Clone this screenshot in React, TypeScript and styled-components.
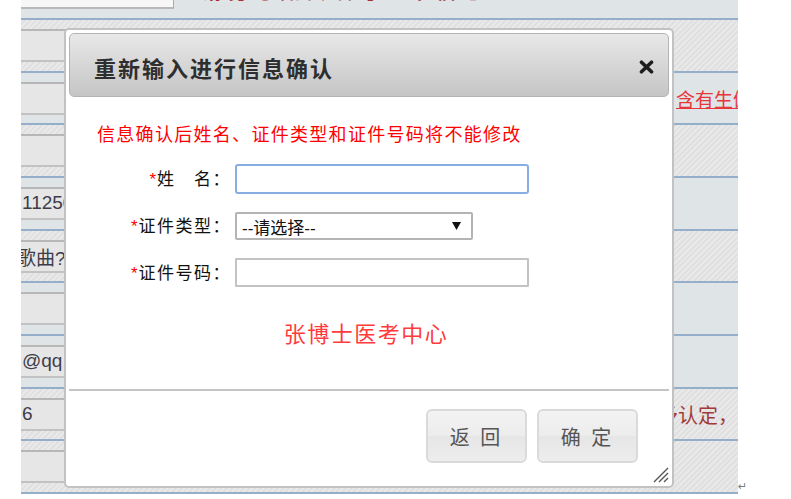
import React from 'react';
import styled, { createGlobalStyle } from 'styled-components';

const GlobalStyle = createGlobalStyle`
	html, body {
		margin: 0;
		padding: 0;
		background: #ffffff;
	}
	body {
		font-family: 'Liberation Sans', 'Noto Sans CJK SC', sans-serif;
	}
	* {
		box-sizing: border-box;
	}
`;

type RowData = {
	value: string;
	striped: boolean;
	note?: string;
	noteKind?: 'link' | 'tail';
};

const rows: RowData[] = [
	{ value: '', striped: true },
	{ value: '', striped: false, note: '含有生僻字的请点击这里', noteKind: 'link' },
	{ value: '', striped: true },
	{ value: '11250', striped: false },
	{ value: '歌曲?', striped: true },
	{ value: '', striped: false },
	{ value: '@qq.com', striped: false },
	{ value: '6', striped: true, note: '经本人确认后不予认定，', noteKind: 'tail' },
	{ value: '', striped: true },
];

function App() {
	return (
		<Page>
			<GlobalStyle />
			<Sheet>
				<TopStrip>
					<TopBox />
					<TopNotice>请务必如实填写以下信息</TopNotice>
				</TopStrip>
				<Rows>
					{rows.map((row, i) => (
						<Row key={i} $striped={row.striped}>
							<FieldBox $offset={row.value === '歌曲?' ? -4 : 1}>{row.value}</FieldBox>
							<NoteCell $kind={row.noteKind}>
								<NoteText $kind={row.noteKind}>{row.note}</NoteText>
							</NoteCell>
						</Row>
					))}
				</Rows>
				<Dialog>
					<Header>
						<Title>重新输入进行信息确认</Title>
						<CloseButton aria-label="关闭">
							<svg width="15" height="14" viewBox="0 0 15 14">
								<path
									d="M2.5 2.2 L12.5 11.8 M12.5 2.2 L2.5 11.8"
									stroke="#1e1e1e"
									strokeWidth="3.6"
									strokeLinecap="round"
								/>
							</svg>
						</CloseButton>
					</Header>
					<Body>
						<Warning>信息确认后姓名、证件类型和证件号码将不能修改</Warning>
						<Form>
							<Label>
								<Star>*</Star>姓　名：
							</Label>
							<TextInput $focused />
							<Label>
								<Star>*</Star>证件类型：
							</Label>
							<SelectBox>
								<span>--请选择--</span>
								<svg width="9" height="8" viewBox="0 0 9 8">
									<path d="M0 0 H9 L4.5 8 Z" fill="#111" />
								</svg>
							</SelectBox>
							<Label>
								<Star>*</Star>证件号码：
							</Label>
							<TextInput />
						</Form>
						<Brand>张博士医考中心</Brand>
					</Body>
					<Divider />
					<Footer>
						<Button>返 回</Button>
						<Button>确 定</Button>
					</Footer>
					<Grip>
						<svg width="16" height="16" viewBox="0 0 16 16">
							<path
								d="M1 15 L15 1 M6 15 L15 6 M11 15 L15 11"
								stroke="#555"
								strokeWidth="1.4"
							/>
						</svg>
					</Grip>
				</Dialog>
			</Sheet>
			<ReturnMark>↵</ReturnMark>
		</Page>
	);
}

const Page = styled.div`
	display: flex;
	align-items: flex-end;
	padding-left: 21px;
	width: 791px;
	height: 499px;
`;

const Sheet = styled.div`
	position: relative;
	width: 717px;
	height: 494px;
	overflow: hidden;
	display: flex;
	flex-direction: column;
	align-self: flex-start;
`;

const TopStrip = styled.div`
	height: 20px;
	display: flex;
	align-items: flex-start;
	background: #dfe4e7;
	border-bottom: 2px solid #95aec9;
	overflow: hidden;
`;

const TopBox = styled.div`
	width: 153px;
	height: 9px;
	background: #f7f7f7;
	border-right: 1px solid #acacac;
	border-bottom: 2px solid #b8b8b8;
`;

const TopNotice = styled.span`
	margin: -19px 0 0 28px;
	font-size: 20px;
	line-height: 22px;
	color: #a53232;
	font-weight: bold;
	letter-spacing: 6px;
`;

const Rows = styled.div`
	flex: 1;
	display: flex;
	flex-direction: column;
`;

const Row = styled.div<{ $striped: boolean }>`
	flex: 1;
	display: flex;
	align-items: center;
	border-bottom: 2px solid #95aec9;
	background: ${(p) =>
		p.$striped
			? 'repeating-linear-gradient(135deg, #e9e9e9 0 2px, #e0e0e0 2px 4px)'
			: '#dfe4e7'};
`;

const FieldBox = styled.div<{ $offset: number }>`
	flex: none;
	width: 420px;
	height: 33px;
	margin-left: -10px;
	padding-left: ${(p) => 10 + p.$offset}px;
	display: flex;
	align-items: center;
	background: #e6e6e6;
	border-top: 2px solid #b7b7b7;
	border-bottom: 2px solid #c2c2c2;
	font-size: 19px;
	color: #3d3d4a;
	white-space: nowrap;
	overflow: hidden;
`;

const NoteCell = styled.div<{ $kind?: 'link' | 'tail' }>`
	flex: 1;
	min-width: 0;
	white-space: nowrap;
	overflow: hidden;
	display: flex;
	justify-content: ${(p) => (p.$kind === 'tail' ? 'flex-end' : 'flex-start')};
	padding-left: ${(p) => (p.$kind === 'link' ? 245 : 0)}px;
`;

const NoteText = styled.span<{ $kind?: 'link' | 'tail' }>`
	flex: none;
	font-size: ${(p) => (p.$kind === 'tail' ? 20 : 19)}px;
	color: ${(p) => (p.$kind === 'link' ? '#e8353a' : '#a23a3a')};
	text-decoration: ${(p) => (p.$kind === 'link' ? 'underline' : 'none')};
`;

const Dialog = styled.div`
	position: absolute;
	left: 43px;
	top: 28px;
	width: 610px;
	height: 460px;
	padding: 3px;
	background: #ffffff;
	border: 2px solid #c2c2c2;
	border-radius: 5px;
	display: flex;
	flex-direction: column;
	font-family: 'Noto Sans CJK SC', 'Liberation Sans', sans-serif;
`;

const Header = styled.div`
	height: 64px;
	flex: none;
	display: flex;
	align-items: center;
	justify-content: space-between;
	padding: 3px 14px 0 24px;
	border: 1px solid #b4b4b4;
	border-radius: 5px;
	background: linear-gradient(#e8e8e8, #c5c5c5);
`;

const Title = styled.h2`
	margin: 0;
	font-size: 22px;
	line-height: 28px;
	font-weight: bold;
	letter-spacing: 2px;
	color: #2e2e2e;
`;

const CloseButton = styled.span`
	display: flex;
	align-items: center;
	padding-top: 1px;
	cursor: pointer;
`;

const Body = styled.div`
	flex: 1;
	display: flex;
	flex-direction: column;
`;

const Warning = styled.p`
	margin: 24px 0 0 28px;
	font-size: 18px;
	line-height: 24px;
	letter-spacing: 1.3px;
	color: #ff0000;
`;

const Form = styled.div`
	display: grid;
	grid-template-columns: 162px auto;
	justify-content: start;
	align-items: center;
	column-gap: 4px;
	row-gap: 18px;
	margin-top: 19px;
`;

const Label = styled.label`
	text-align: right;
	font-size: 17px;
	line-height: 22px;
	letter-spacing: 1.5px;
	color: #111;
	white-space: nowrap;
`;

const Star = styled.span`
	color: #ff0000;
	font-family: 'Liberation Sans', sans-serif;
	font-size: 17px;
	letter-spacing: 0;
	margin-right: 1px;
`;

const TextInput = styled.input<{ $focused?: boolean }>`
	width: 294px;
	height: ${(p) => (p.$focused ? 30 : 29)}px;
	margin: 0;
	padding: 0 6px;
	background: #ffffff;
	border: ${(p) => (p.$focused ? '2px solid #86aee3' : '2px solid #c3c3c3')};
	border-radius: ${(p) => (p.$focused ? 3 : 1)}px;
	outline: none;
	font-size: 16px;
`;

const SelectBox = styled.div`
	width: 238px;
	height: 28px;
	display: flex;
	align-items: center;
	justify-content: space-between;
	padding: 0 10px 0 5px;
	border: 2px solid #b4b4b4;
	border-radius: 2px;
	background: #ffffff;
	font-size: 17px;
	color: #111;
	font-family: 'Liberation Sans', 'Noto Sans CJK SC', sans-serif;
`;

const Brand = styled.div`
	margin-top: 30px;
	text-align: center;
	font-size: 22px;
	line-height: 30px;
	letter-spacing: 1.5px;
	color: #ff3b3b;
	padding-right: 6px;
`;

const Divider = styled.div`
	height: 2px;
	flex: none;
	background: #c4c4c4;
`;

const Footer = styled.div`
	flex: none;
	display: flex;
	justify-content: flex-end;
	gap: 10px;
	padding: 18px 31px 20px 0;
`;

const Button = styled.button`
	width: 101px;
	height: 54px;
	margin: 0;
	padding: 0;
	border: 2px solid #dadada;
	border-radius: 6px;
	background: linear-gradient(#f3f3f3 0%, #ececec 50%, #e6e6e6 51%, #ededed 100%);
	font-family: 'Noto Sans CJK SC', sans-serif;
	font-size: 20px;
	letter-spacing: 3px;
	color: #555555;
	cursor: pointer;
`;

const Grip = styled.div`
	position: absolute;
	right: 3px;
	bottom: 3px;
	width: 16px;
	height: 16px;
	display: flex;
`;

const ReturnMark = styled.span`
	font-family: 'DejaVu Sans', sans-serif;
	font-size: 11px;
	line-height: 12px;
	color: #7a7a7a;
	margin-bottom: 6px;
`;

export default App;
